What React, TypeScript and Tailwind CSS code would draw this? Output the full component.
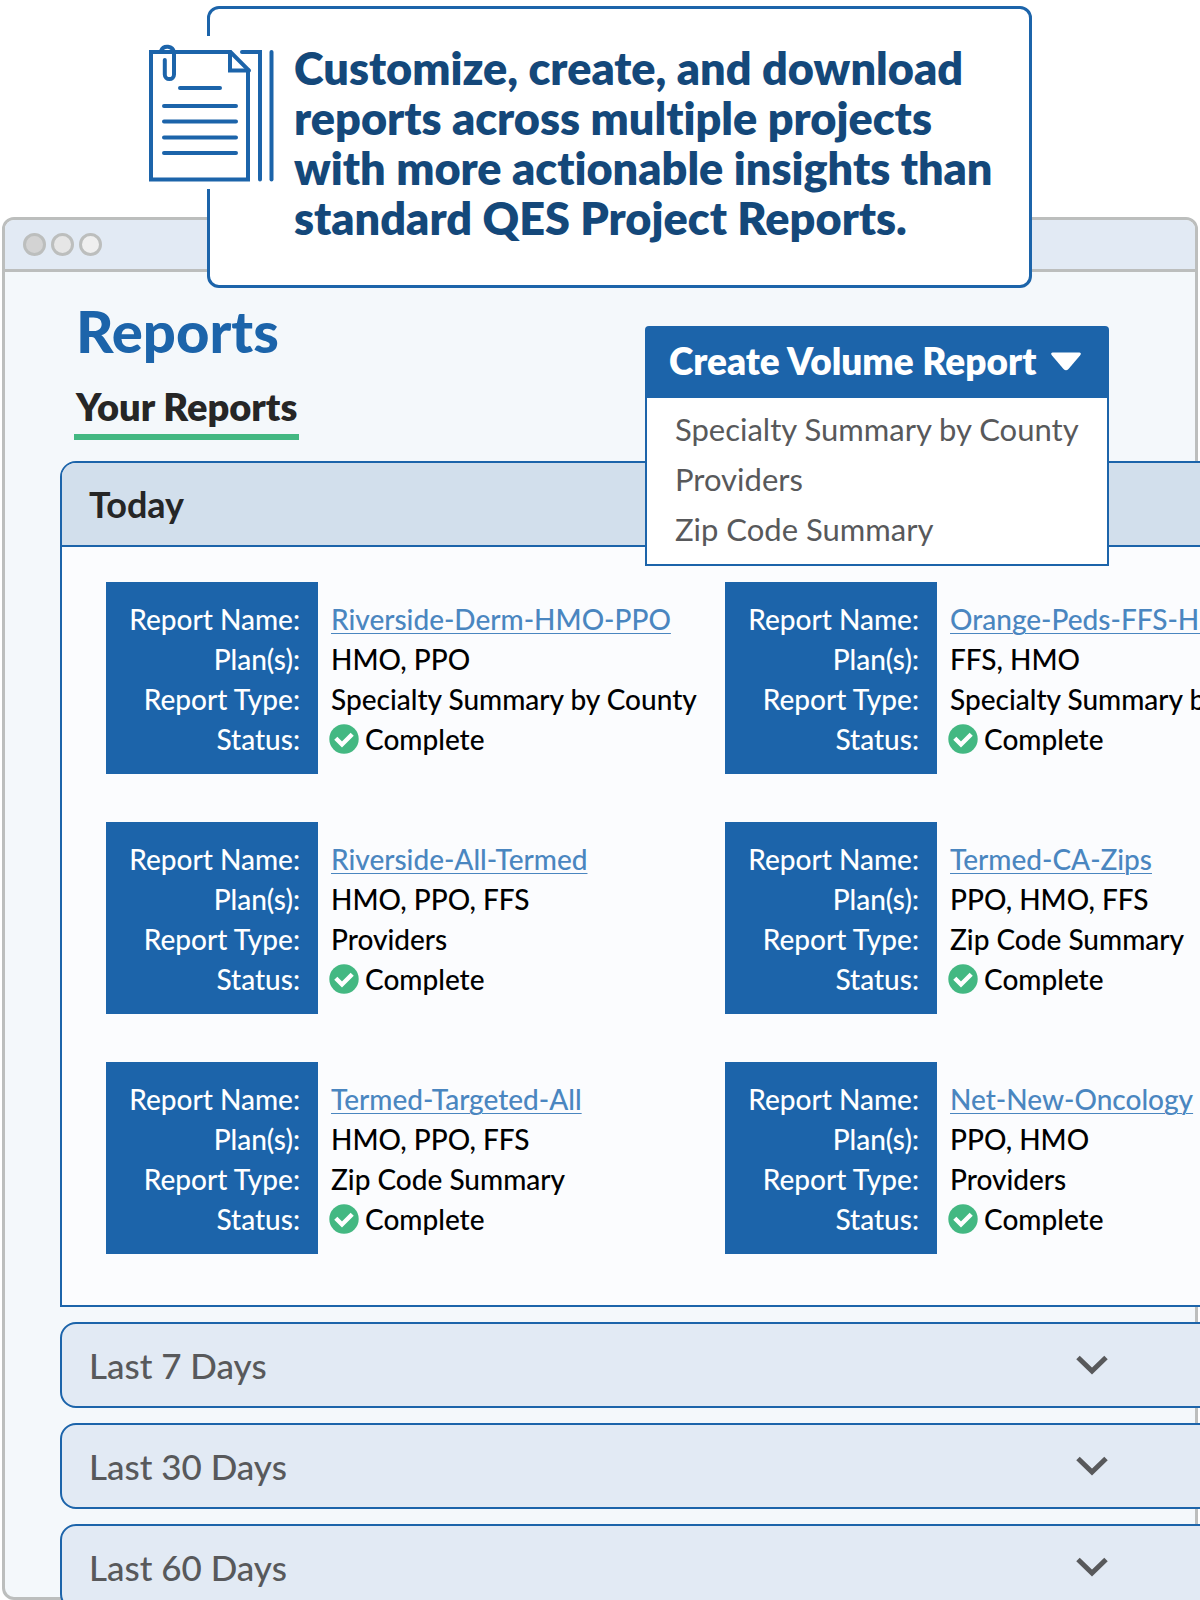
import React from 'react';

interface Report {
  name: string;
  plans: string;
  type: string;
  status: string;
}

const reports: Report[] = [
  { name: 'Riverside-Derm-HMO-PPO', plans: 'HMO, PPO', type: 'Specialty Summary by County', status: 'Complete' },
  { name: 'Orange-Peds-FFS-HMO', plans: 'FFS, HMO', type: 'Specialty Summary by County', status: 'Complete' },
  { name: 'Riverside-All-Termed', plans: 'HMO, PPO, FFS', type: 'Providers', status: 'Complete' },
  { name: 'Termed-CA-Zips', plans: 'PPO, HMO, FFS', type: 'Zip Code Summary', status: 'Complete' },
  { name: 'Termed-Targeted-All', plans: 'HMO, PPO, FFS', type: 'Zip Code Summary', status: 'Complete' },
  { name: 'Net-New-Oncology', plans: 'PPO, HMO', type: 'Providers', status: 'Complete' },
];

const volumeReports = ['Specialty Summary by County', 'Providers', 'Zip Code Summary'];
const olderPeriods = ['Last 7 Days', 'Last 30 Days', 'Last 60 Days'];

const DocumentsIcon: React.FC<{ className?: string }> = ({ className }) => (
  <svg viewBox="148 36 128 153" className={className} fill="none" stroke="#1c64aa" strokeWidth="4" strokeLinecap="round" strokeLinejoin="round" aria-hidden="true">
    <path strokeLinejoin="miter" d="M230.500 52H151V179.500H248V69.500L230.500 52Z" />
    <path strokeLinejoin="miter" d="M230 52V70.500H249" />
    <path strokeLinejoin="miter" d="M242 52H260V179.500" />
    <path d="M271.500 52V179.500" />
    <path d="M180 88H220M164 106H236M164 121.500H236M164 137.500H236M164 153H236" />
    <path d="M161 51a6.800 6.800 0 0 1 13 1.500V74.500a4.600 4.600 0 0 1-9.200 0V60" />
  </svg>
);

const CheckBadge: React.FC = () => (
  <svg viewBox="0 0 30 30" className="-ml-0.5 size-[30px] shrink-0" aria-hidden="true">
    <circle cx="15" cy="15" r="14.700" fill="#43b882" />
    <path d="M6.800 14.300 13 20.500 23.200 10.300" fill="none" stroke="#fff" strokeWidth="4.400" />
  </svg>
);

const ReportCard: React.FC<{ report: Report }> = ({ report }) => (
  <article className="flex gap-[13px] text-[28px] leading-[40px] font-medium whitespace-nowrap">
    <div className="w-[212px] shrink-0 bg-[#1c64aa] pt-[17px] pr-[18px] pb-[15px] text-right text-white">
      <p>Report Name:</p>
      <p>Plan(s):</p>
      <p>Report Type:</p>
      <p>Status:</p>
    </div>
    <div className="pt-[17px] text-black">
      <p><a href="#" className="text-[#4a86c0] underline decoration-1 underline-offset-3">{report.name}</a></p>
      <p>{report.plans}</p>
      <p>{report.type}</p>
      <p className="flex items-center gap-1.5"><CheckBadge />{report.status}</p>
    </div>
  </article>
);

export default function App() {
  return (
    <div className="flex h-screen flex-col overflow-hidden bg-white pt-1.5 font-['Lato',sans-serif] [font-variant-ligatures:none]">
      {/* Callout */}
      <section className="relative z-10 mr-[168px] ml-[207px] rounded-xl border-3 border-[#1c64aa] bg-white pt-[34px] pb-[42px] pl-[84px]">
        <div className="absolute top-[27px] -left-[62px] bg-white">
          <DocumentsIcon className="h-[153px] w-[128px]" />
        </div>
        <p className="text-[45px] leading-[50px] font-extrabold whitespace-nowrap text-[#14487a]">
          Customize, create, and download<br />
          reports across multiple projects<br />
          with more actionable insights than<br />
          standard QES Project Reports.
        </p>
      </section>

      {/* Browser window */}
      <div className="mx-0.5 -mt-[71px] flex min-h-0 flex-1 flex-col rounded-xl border-3 border-[#bcbebd] bg-[#f4f8fb]">
        <div className="flex h-[52px] shrink-0 items-center gap-[5px] rounded-t-[9px] border-b-3 border-[#bcbebd] bg-[#e2eaf4] pl-[18px]">
          <span className="size-[23px] rounded-full border-3 border-[#bcbebd] bg-[#d3d3d3]" />
          <span className="size-[23px] rounded-full border-3 border-[#bcbebd] bg-[#e6e6e6]" />
          <span className="size-[23px] rounded-full border-3 border-[#bcbebd] bg-[#efefef]" />
        </div>

        <main className="min-h-0 flex-1 pl-[55px]">
          <div className="flex h-[189px] items-start justify-between pr-[86px]">
            <div className="pl-[14px]">
              <h1 className="pt-[26px] pl-0.5 text-[58px] leading-[66px] font-black text-[#1c64aa]">Reports</h1>
              <h2 className="mt-5 border-b-6 border-[#43b882] px-0.5 pb-1.5 text-[38px] leading-[44px] font-extrabold text-[#262626]">Your Reports</h2>
            </div>
            <div className="relative mt-[54px] w-[464px]">
              <button type="button" aria-expanded="true" className="flex h-[70px] w-full items-center justify-between rounded-t-[4px] bg-[#1c64aa] pr-[27px] pl-6 text-[37px] font-extrabold whitespace-nowrap text-white">
                Create Volume Report
                <svg viewBox="0 0 32 20" className="h-5 w-8" aria-hidden="true">
                  <path d="M2.500 1.500H29.500Q32 2 30 4.500L18.500 18Q16 20.500 13.500 18L2 4.500Q0 2 2.500 1.500Z" fill="#fff" />
                </svg>
              </button>
              <ul className="absolute inset-x-0 top-full z-10 border-2 border-[#1c64aa] bg-white pt-1.5 pb-2.5 pl-7 text-[31px] leading-[50px] whitespace-nowrap text-[#58595b]">
                {volumeReports.map(item => (
                  <li key={item}><a href="#">{item}</a></li>
                ))}
              </ul>
            </div>
          </div>

          {/* The report list runs out past the right edge of the window */}
          <div className="-mr-[151px] space-y-[15px]">
            <section className="rounded-tl-2xl border-2 border-[#1c64aa] bg-[#fbfcfe]">
              <h3 className="flex h-[84px] items-center rounded-tl-[14px] border-b-2 border-[#1c64aa] bg-[#d2dfec] pl-[27px] text-[36px] font-bold text-[#262626]">Today</h3>
              <div className="grid grid-cols-2 gap-y-12 pt-[35px] pb-[51px] pl-11">
                {reports.map(report => (
                  <ReportCard key={report.name} report={report} />
                ))}
              </div>
            </section>

            {olderPeriods.map(period => (
              <button key={period} type="button" aria-expanded="false" className="flex h-[86px] w-full items-center justify-between rounded-2xl border-2 border-[#1c64aa] bg-[#e2eaf4] pr-[236px] pl-[27px] text-[35px] font-medium text-[#58595b]">
                {period}
                <svg viewBox="0 0 32 20" className="h-5 w-8" fill="none" stroke="#58595b" strokeWidth="5" aria-hidden="true">
                  <path d="M2 2.500 16 16 30 2.500" />
                </svg>
              </button>
            ))}
          </div>
        </main>
      </div>
    </div>
  );
}
